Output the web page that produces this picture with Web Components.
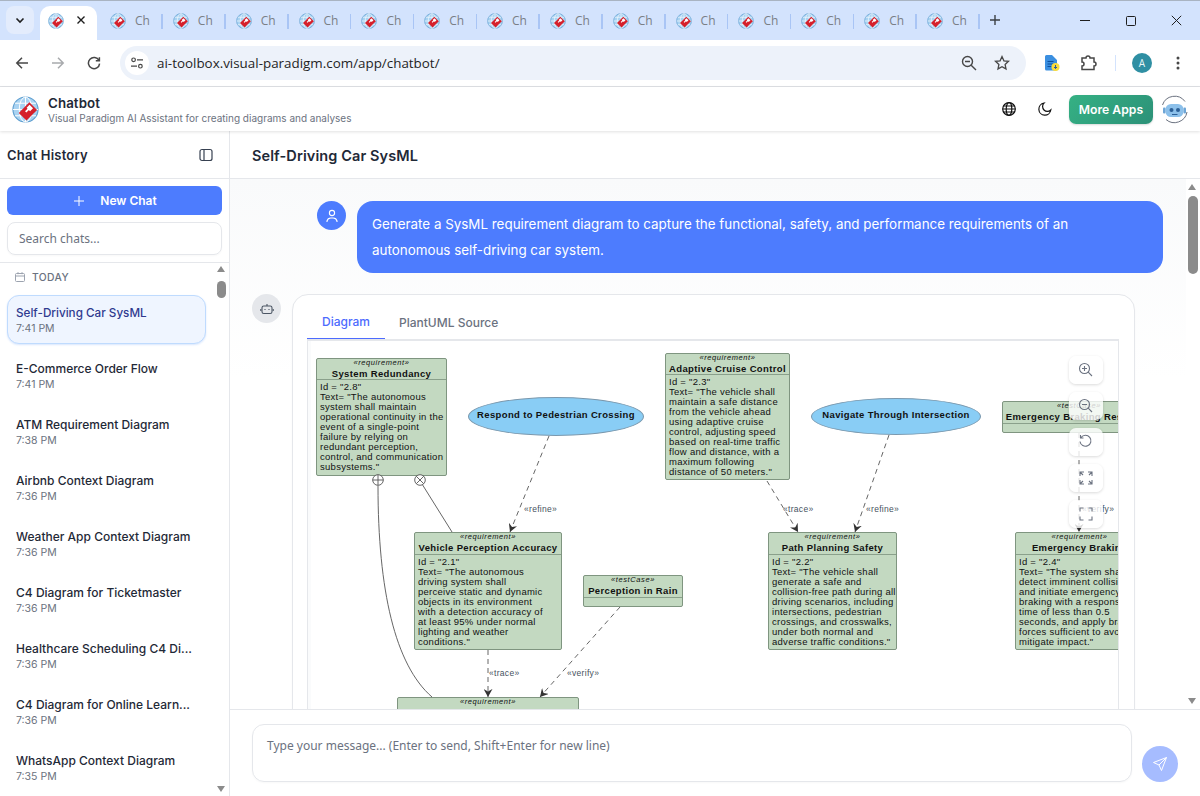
<!DOCTYPE html>
<html lang="en">
<head>
<meta charset="utf-8">
<title>Chatbot</title>
<style>
    html, body { margin: 0; height: 100%; overflow: hidden; background: #fff; }
    body { display: flex; flex-direction: column; font-family: "Inter", "Noto Sans", sans-serif; }
    .workspace { display: flex; flex: 1; min-height: 0; }
</style>
</head>
<body>
<browser-chrome url="ai-toolbox.visual-paradigm.com/app/chatbot/"></browser-chrome>
<app-header></app-header>
<div class="workspace">
    <chat-sidebar>
        <chat-item active title-text="Self-Driving Car SysML" time="7:41 PM"></chat-item>
        <chat-item title-text="E-Commerce Order Flow" time="7:41 PM"></chat-item>
        <chat-item title-text="ATM Requirement Diagram" time="7:38 PM"></chat-item>
        <chat-item title-text="Airbnb Context Diagram" time="7:36 PM"></chat-item>
        <chat-item title-text="Weather App Context Diagram" time="7:36 PM"></chat-item>
        <chat-item title-text="C4 Diagram for Ticketmaster" time="7:36 PM"></chat-item>
        <chat-item title-text="Healthcare Scheduling C4 Di..." time="7:36 PM"></chat-item>
        <chat-item title-text="C4 Diagram for Online Learn..." time="7:36 PM"></chat-item>
        <chat-item title-text="WhatsApp Context Diagram" time="7:35 PM"></chat-item>
    </chat-sidebar>
    <chat-main title-text="Self-Driving Car SysML">
        <user-message>Generate a SysML requirement diagram to capture the functional, safety, and performance requirements of an autonomous self-driving car system.</user-message>
        <diagram-card>
            <sysml-diagram>
                <uml-node kind="requirement" name="System Redundancy" x="9" y="18" w="131" h="118" head="21">Id = "2.8"<br>Text= "The autonomous<br>system shall maintain<br>operational continuity in the<br>event of a single-point<br>failure by relying on<br>redundant perception,<br>control, and communication<br>subsystems."</uml-node>
                <uml-node kind="requirement" name="Vehicle Perception Accuracy" x="107" y="192" w="148" h="118" head="22">Id = "2.1"<br>Text= "The autonomous<br>driving system shall<br>perceive static and dynamic<br>objects in its environment<br>with a detection accuracy of<br>at least 95% under normal<br>lighting and weather<br>conditions."</uml-node>
                <uml-node kind="testCase" name="Perception in Rain" x="276" y="235" w="100" h="32" head="22"></uml-node>
                <uml-node kind="requirement" name="Adaptive Cruise Control" x="358" y="13" w="125" h="127" head="21">Id = "2.3"<br>Text= "The vehicle shall<br>maintain a safe distance<br>from the vehicle ahead<br>using adaptive cruise<br>control, adjusting speed<br>based on real-time traffic<br>flow and distance, with a<br>maximum following<br>distance of 50 meters."</uml-node>
                <uml-node kind="requirement" name="Path Planning Safety" x="461" y="192" w="129" h="118" head="22">Id = "2.2"<br>Text= "The vehicle shall<br>generate a safe and<br>collision-free path during all<br>driving scenarios, including<br>intersections, pedestrian<br>crossings, and crosswalks,<br>under both normal and<br>adverse traffic conditions."</uml-node>
                <uml-node kind="testCase" name="Emergency Braking Response" x="695" y="61" w="154" h="32" head="22"></uml-node>
                <uml-node kind="requirement" name="Emergency Braking" x="708" y="192" w="129" h="118" head="22">Id = "2.4"<br>Text= "The system shall<br>detect imminent collision<br>and initiate emergency<br>braking with a response<br>time of less than 0.5<br>seconds, and apply brake<br>forces sufficient to avoid or<br>mitigate impact."</uml-node>
                <uml-node kind="requirement" name="Environmental Sensing Robustness" x="90" y="357" w="182" h="60" head="22"></uml-node>
                <uml-usecase name="Respond to Pedestrian Crossing" x="161" y="57" w="176" h="39"></uml-usecase>
                <uml-usecase name="Navigate Through Intersection" x="504" y="58" w="170" h="37"></uml-usecase>
            </sysml-diagram>
        </diagram-card>
    </chat-main>
</div>

<script>
const FAVICON = `
    <svg viewBox="0 0 28 28" width="100%" height="100%" aria-hidden="true">
        <circle cx="14" cy="14" r="13" fill="#a9d3f2" stroke="#5f9fd0" stroke-width="1.2"/>
        <g fill="none" stroke="#fff" stroke-width="1">
            <ellipse cx="14" cy="14" rx="6.5" ry="13"/>
            <path d="M1 14h26M3 7.5h22M3 20.5h22M14 1v26"/>
        </g>
        <path d="M18 6.5l8 8-11 11-8-8z" fill="#d5202b"/>
        <path d="M15.2 12.2l3-3 3.6 3.6-3 3-1.3-1.3-2.6 2.6-1.4-1.4 2.6-2.6z" fill="#fff"/>
    </svg>`;

class BrowserChrome extends HTMLElement {
    constructor() {
        super();
        this.attachShadow({ mode: 'open' });
    }

    connectedCallback() {
        const tabs = Array.from({ length: 14 }, () => `
            <div class="tab"><span class="fav">${FAVICON}</span><span class="label">Ch</span></div>
        `).join('');
        this.shadowRoot.innerHTML = `
            <style>
                :host { display: block; flex: none; font-family: "Open Sans", "Noto Sans", sans-serif; }
                .strip { height: 40px; background: #d3e3fd; display: flex; align-items: flex-end; box-sizing: border-box; border-top: 1px solid #a9b4c2; position: relative; }
                .down { width: 28px; height: 28px; margin: 0 6px 6px 6px; background: #e3ecfc; border-radius: 8px; display: flex; align-items: center; justify-content: center; }
                .active { width: 57px; height: 34px; box-sizing: border-box; background: #fff; border-radius: 10px 10px 0 0; display: flex; align-items: center; padding: 0 11px 6px 8px; justify-content: space-between; }
                .fav { width: 16px; height: 16px; display: block; flex: none; }
                .tab { width: 62.85px; height: 34px; box-sizing: border-box; padding: 0 10px 6px 13px; display: flex; align-items: center; gap: 9px; position: relative; flex: none; }
                .tab::after { content: ""; position: absolute; right: -3px; top: 8px; height: 15px; width: 1.5px; background: #a9c5f5; }
                .label { font-size: 12px; color: #7a7f86; white-space: nowrap; }
                .plus { width: 28px; height: 28px; margin: 0 0 6px 4px; display: flex; align-items: center; justify-content: center; }
                .win { margin-left: auto; display: flex; height: 39px; align-self: flex-start; padding-right: 1px; }
                .win span { width: 46px; display: flex; align-items: center; justify-content: center; }
                .bar { height: 47px; box-sizing: border-box; background: #fff; border-bottom: 1px solid #dfe1e5; display: flex; align-items: center; padding: 0 9px 0 7px; border-radius: 10px 10px 0 0; }
                .nav { width: 30px; height: 30px; margin-right: 6px; display: flex; align-items: center; justify-content: center; }
                .omni { width: 906px; height: 34px; margin-left: 5px; box-sizing: border-box; background: #edf2fa; border-radius: 17px; display: flex; align-items: center; padding: 0 16px 0 5px; }
                .site { width: 24px; height: 24px; background: #fff; border-radius: 50%; display: flex; align-items: center; justify-content: center; margin-right: 8px; }
                .url { flex: 1; font-size: 13.4px; color: #1f1f1f; white-space: nowrap; }
                .omni svg.act { margin-left: 17px; }
                .tools { display: flex; align-items: center; margin-left: 0; }
                .tools > span { display: flex; align-items: center; justify-content: center; }
                .avatar { width: 20px; height: 20px; border-radius: 50%; background: #2f8fa3; color: #e8f6f8; font-size: 10px; display: flex; align-items: center; justify-content: center; }
                .sep { width: 1px; height: 16px; background: #d3e3fd; }
            </style>
            <div class="strip">
                <div class="down"><svg width="12" height="12" viewBox="0 0 12 12"><path d="M2.5 4.5L6 8l3.5-3.5" fill="none" stroke="#1f1f1f" stroke-width="1.6"/></svg></div>
                <div class="active"><span class="fav">${FAVICON}</span><svg width="10" height="10" viewBox="0 0 10 10"><path d="M1.5 1.5l7 7M8.5 1.5l-7 7" stroke="#1f1f1f" stroke-width="1.4"/></svg></div>
                ${tabs}
                <div class="plus"><svg width="12" height="12" viewBox="0 0 12 12"><path d="M6 1v10M1 6h10" stroke="#3c4043" stroke-width="1.4"/></svg></div>
                <div class="win">
                    <span><svg width="11" height="11" viewBox="0 0 11 11"><path d="M1 5.5h10" stroke="#1f1f1f"/></svg></span>
                    <span><svg width="11" height="11" viewBox="0 0 11 11"><rect x="1.5" y="1.5" width="9" height="9" rx="1" fill="none" stroke="#1f1f1f"/></svg></span>
                    <span><svg width="11" height="11" viewBox="0 0 11 11"><path d="M.8.8l9.4 9.4M10.2.8L.8 10.2" stroke="#1f1f1f"/></svg></span>
                </div>
            </div>
            <div class="bar">
                <span class="nav"><svg width="14" height="14" viewBox="0 0 14 14"><path d="M13 7H2M7 1.8L1.8 7 7 12.2" fill="none" stroke="#474747" stroke-width="1.5"/></svg></span>
                <span class="nav"><svg width="14" height="14" viewBox="0 0 14 14"><path d="M1 7h11M7 1.8L12.2 7 7 12.2" fill="none" stroke="#a8aaad" stroke-width="1.5"/></svg></span>
                <span class="nav"><svg width="14" height="14" viewBox="0 0 14 14"><path d="M12 4.5A5.6 5.6 0 1 0 12.6 7.6M12.4 1.2v3.6H8.8" fill="none" stroke="#474747" stroke-width="1.5"/></svg></span>
                <div class="omni">
                    <span class="site"><svg width="14" height="14" viewBox="0 0 14 14" fill="none" stroke="#474747" stroke-width="1.2"><circle cx="3.6" cy="3.8" r="1.8"/><path d="M7 3.8h6M1 10.2h6"/><circle cx="10.4" cy="10.2" r="1.8"/></svg></span>
                    <span class="url">${this.getAttribute('url')}</span>
                    <svg class="act" width="16" height="16" viewBox="0 0 16 16" fill="none" stroke="#474747" stroke-width="1.4"><circle cx="6.5" cy="6.5" r="5"/><path d="M4 6.5h5M10.2 10.2L15 15"/></svg>
                    <svg class="act" width="16" height="16" viewBox="0 0 16 16" fill="none" stroke="#474747" stroke-width="1.3"><path d="M8 1.6l1.9 4.2 4.6.5-3.4 3.1.9 4.5L8 11.7l-4 2.2.9-4.5L1.500 6.300l4.6-.5z"/></svg>
                </div>
                <div class="tools">
                    <span style="width:16px;margin-left:18px"><svg width="16" height="18" viewBox="0 0 16 18"><path d="M1 2.500A1.500 1.500 0 0 1 2.500 1H8l5 5v9a1.500 1.500 0 0 1-1.500 1.500h-9A1.500 1.500 0 0 1 1 15z" fill="#3b8fe0"/><path d="M3.500 7.500h6M3.500 10h6M3.500 12.500h4" stroke="#0d4f9e"/><circle cx="11.500" cy="13" r="4" fill="#fbdc3c"/><path d="M11.500 11v3.500M10 13l1.500 1.500L13 13" stroke="#2a5a9c" fill="none"/></svg></span>
                    <span style="width:18px;margin-left:20px"><svg width="18" height="18" viewBox="0 0 18 18"><path d="M2 4.500h4a2 2 0 0 1 4 0h4v4a2 2 0 0 1 0 4v3.500H2v-3.500a2 2 0 0 0 0-4z" fill="none" stroke="#474747" stroke-width="1.500" transform="translate(0 -.5)"/></svg></span>
                    <span class="sep" style="margin-left:17px"></span>
                    <span class="avatar" style="margin-left:16px">A</span>
                    <span style="width:4px;margin-left:24px"><svg width="4" height="14" viewBox="0 0 4 14" fill="#474747"><circle cx="2" cy="2" r="1.500"/><circle cx="2" cy="7" r="1.500"/><circle cx="2" cy="12" r="1.500"/></svg></span>
                </div>
            </div>
        `;
    }
}

class AppHeader extends HTMLElement {
    constructor() {
        super();
        this.attachShadow({ mode: 'open' });
    }

    connectedCallback() {
        this.shadowRoot.innerHTML = `
            <style>
                :host { display: flex; flex: none; height: 44px; align-items: center; padding: 0 11px 0 12px; background: #fff; box-shadow: 0 1px 3px rgba(0,0,0,.12); position: relative; z-index: 2; }
                .logo { width: 27px; height: 27px; margin-right: 9px; }
                .names { flex: 1; margin-top: 3px; }
                .name { font-size: 13.3px; font-weight: 600; color: #1f2937; line-height: 15px; letter-spacing: .1px; }
                .sub { font-size: 10px; color: #6b7280; line-height: 15px; }
                .icon { display: flex; width: 16px; height: 16px; margin-right: 20px; }
                .icon + .icon { margin-right: 17px; }
                .more { height: 29px; width: 84px; border: 0; border-radius: 7px; background: linear-gradient(135deg, #35b184, #2c9178); color: #fff; font: 600 12.2px "Inter", sans-serif; margin: 0 7px 0 -1px; box-shadow: 0 1px 2px rgba(0,0,0,.15); padding: 0; }
                .bot { width: 29px; height: 29px; }
            </style>
            <span class="logo">${FAVICON}</span>
            <div class="names">
                <div class="name">Chatbot</div>
                <div class="sub">Visual Paradigm AI Assistant for creating diagrams and analyses</div>
            </div>
            <span class="icon"><svg width="16" height="16" viewBox="0 0 16 16" fill="none" stroke="#111" stroke-width="1.200"><circle cx="8" cy="8" r="6.300"/><ellipse cx="8" cy="8" rx="2.800" ry="6.300"/><path d="M1.700 8h12.600M2.500 5h11M2.500 11h11"/></svg></span>
            <span class="icon"><svg width="16" height="16" viewBox="0 0 16 16" fill="none" stroke="#111" stroke-width="1.200"><path d="M7 2.200A6 6 0 1 0 13.800 9 4.800 4.800 0 0 1 7 2.200z"/></svg></span>
            <button class="more">More Apps</button>
            <span class="bot">
                <svg width="29" height="29" viewBox="0 0 29 29" fill="none">
                    <path d="M2.500 10A12.800 12.800 0 0 1 25 6.500M27 17A12.800 12.800 0 0 1 6 24.500" stroke="#6b7280" stroke-width="1"/>
                    <rect x="5.500" y="9" width="18" height="13" rx="5.500" fill="#8cc0ea"/>
                    <circle cx="11.500" cy="15" r="2" fill="#2b5f96"/><circle cx="18" cy="15" r="2" fill="#2b5f96"/>
                    <path d="M12 19.500h5.500" stroke="#2b5f96"/>
                    <rect x="3" y="12.500" width="2.500" height="6" rx="1" fill="#6da5d6"/><rect x="23.500" y="12.500" width="2.500" height="6" rx="1" fill="#6da5d6"/>
                </svg>
            </span>
        `;
    }
}

class ChatSidebar extends HTMLElement {
    constructor() {
        super();
        this.attachShadow({ mode: 'open' });
        this.shadowRoot.innerHTML = `
            <style>
                :host { display: flex; flex-direction: column; flex: none; width: 230px; box-sizing: border-box; border-right: 1px solid #e5e7eb; background: #fff; position: relative; overflow: hidden; }
                .head { height: 48px; flex: none; box-sizing: border-box; border-bottom: 1px solid #e5e7eb; display: flex; align-items: center; justify-content: space-between; padding: 1px 16px 0 7px; }
                h2 { margin: 0; font-size: 13px; font-weight: 600; color: #1f2937; letter-spacing: .2px; }
                .tools { flex: none; padding: 7px; border-bottom: 1px solid #e5e7eb; display: flex; flex-direction: column; gap: 7px; height: 84px; box-sizing: border-box; }
                .new { height: 29px; flex: none; border: 0; border-radius: 6px; background: #4d7cfe; color: #fff; font: 600 12px "Inter", sans-serif; display: flex; align-items: center; justify-content: center; gap: 15px; padding: 0 0 0 1px; }
                .search { height: 33px; flex: none; box-sizing: border-box; border: 1px solid #e5e7eb; border-radius: 8px; padding: 0 11px; font: 12px "Noto Sans", sans-serif; color: #6b7280; display: flex; align-items: center; box-shadow: 0 1px 2px rgba(0,0,0,.03); }
                .day { flex: none; height: 32px; display: flex; align-items: center; gap: 7px; padding: 0 0 5px 15px; box-sizing: border-box; font-size: 10.3px; font-weight: 500; color: #6b7280; letter-spacing: .4px; }
                .list { display: flex; flex-direction: column; gap: 7px; padding: 0 23px 0 7px; flex: 1; }
                .scroll { position: absolute; right: 1px; top: 133px; bottom: 0; width: 12px; }
                .up { position: absolute; top: 2px; left: 1px; width: 0; height: 0; border: 4.500px solid transparent; border-top: 0; border-bottom: 6px solid #8b8b8b; }
                .thumb { position: absolute; top: 17px; left: 1px; width: 9px; height: 17px; border-radius: 5px; background: #8b8b8b; }
                .dn { position: absolute; bottom: 4px; left: 1px; width: 0; height: 0; border: 4.500px solid transparent; border-bottom: 0; border-top: 6px solid #8b8b8b; }
            </style>
            <div class="head">
                <h2>Chat History</h2>
                <svg width="14" height="14" viewBox="0 0 14 14" fill="none" stroke="#374151" stroke-width="1.200"><rect x="1" y="1.500" width="12" height="11" rx="2"/><path d="M5 1.500v11"/></svg>
            </div>
            <div class="tools">
                <button class="new"><svg width="12" height="12" viewBox="0 0 12 12"><path d="M6 1v10M1 6h10" stroke="#fff" stroke-width="1"/></svg>New Chat</button>
                <div class="search">Search chats...</div>
            </div>
            <div class="day">
                <svg width="10" height="10" viewBox="0 0 10 10" fill="none" stroke="#9ca3af" stroke-width="1"><rect x=".5" y="1.500" width="9" height="8" rx="1"/><path d="M.5 4h9M3 .2v2M7 .2v2"/></svg>
                TODAY
            </div>
            <div class="list"><slot></slot></div>
            <div class="scroll"><span class="up"></span><span class="thumb"></span><span class="dn"></span></div>
        `;
    }
}

class ChatItem extends HTMLElement {
    constructor() {
        super();
        this.attachShadow({ mode: 'open' });
    }

    connectedCallback() {
        this.shadowRoot.innerHTML = `
            <style>
                :host { display: block; height: 49px; box-sizing: border-box; padding: 9px 8px; border-radius: 12px; border: 1px solid transparent; white-space: nowrap; overflow: hidden; }
                :host([active]) { background: #eff5ff; border-color: #bfdbfe; box-shadow: 0 1px 2px rgba(59,130,246,.2); }
                .t { font-size: 12px; font-weight: 500; color: #1f2937; line-height: 16px; }
                :host([active]) .t { color: #2f3a8f; font-size: 11.7px; }
                .m { font-size: 10.500px; color: #6b7280; line-height: 15px; }
            </style>
            <div class="t">${this.getAttribute('title-text')}</div>
            <div class="m">${this.getAttribute('time')}</div>
        `;
    }
}

class ChatMain extends HTMLElement {
    constructor() {
        super();
        this.attachShadow({ mode: 'open' });
    }

    connectedCallback() {
        this.shadowRoot.innerHTML = `
            <style>
                :host { display: flex; flex-direction: column; flex: 1; min-width: 0; position: relative; background: #fff; }
                .title { height: 48px; flex: none; box-sizing: border-box; border-bottom: 1px solid #e5e7eb; display: flex; align-items: center; padding: 1px 22px 0; font-size: 14.500px; font-weight: 600; color: #1f2937; letter-spacing: .1px; }
                .msgs { flex: 1; min-height: 0; overflow: hidden; padding: 22px 37px 0 22px; background: linear-gradient(#f9fafb, #fff 200px); display: flex; flex-direction: column; gap: 21px; position: relative; }
                .scroll { position: absolute; right: 0; top: 0; bottom: 0; width: 14px; background: #fff; }
                .up { position: absolute; top: 5px; left: 2px; width: 0; height: 0; border: 4.500px solid transparent; border-top: 0; border-bottom: 6px solid #8b8b8b; }
                .thumb { position: absolute; top: 17px; left: 2px; width: 10px; height: 78px; border-radius: 5px; background: #8b8b8b; }
                .dn { position: absolute; bottom: 5px; left: 2px; width: 0; height: 0; border: 4.500px solid transparent; border-bottom: 0; border-top: 6px solid #8b8b8b; }
                .composer { height: 87px; flex: none; box-sizing: border-box; border-top: 1px solid #e5e7eb; background: #fff; padding: 14px 22px 14px; display: flex; gap: 10px; align-items: flex-end; }
                .input { flex: none; width: 880px; height: 58px; box-sizing: border-box; border: 1px solid #e5e7eb; border-radius: 12px; padding: 12px 14px; font: 12px "Noto Sans", sans-serif; color: #6b7280; box-shadow: 0 1px 2px rgba(0,0,0,.03); }
                .send { width: 36px; height: 36px; border-radius: 50%; background: #a6bcff; display: flex; align-items: center; justify-content: center; flex: none; }
            </style>
            <div class="title">${this.getAttribute('title-text')}</div>
            <div class="msgs">
                <slot></slot>
                <div class="scroll"><span class="up"></span><span class="thumb"></span><span class="dn"></span></div>
            </div>
            <div class="composer">
                <div class="input">Type your message... (Enter to send, Shift+Enter for new line)</div>
                <div class="send"><svg width="16" height="16" viewBox="0 0 16 16" fill="none" stroke="#fff" stroke-width="1"><path d="M14.500 1.500L1.500 6.500l5.500 2.500 2.500 5.500zM14.500 1.500L7 9"/></svg></div>
            </div>
        `;
    }
}

class UserMessage extends HTMLElement {
    constructor() {
        super();
        this.attachShadow({ mode: 'open' });
        this.shadowRoot.innerHTML = `
            <style>
                :host { display: flex; gap: 11px; padding-left: 65px; flex: none; }
                .av { width: 29px; height: 29px; border-radius: 50%; background: #4d7cfe; flex: none; display: flex; align-items: center; justify-content: center; }
                .bubble { width: 806px; height: 72px; box-sizing: border-box; background: #4d7cfe; color: #fff; border-radius: 16px; padding: 10px 40px 10px 15px; font-size: 13.4px; line-height: 26px; }
            </style>
            <span class="av"><svg width="14" height="14" viewBox="0 0 14 14" fill="none" stroke="#fff" stroke-width="1.100"><circle cx="7" cy="4" r="2.600"/><path d="M2 13v-1a4 4 0 0 1 4-3h2a4 4 0 0 1 4 3v1"/></svg></span>
            <div class="bubble"><slot></slot></div>
        `;
    }
}

class DiagramCard extends HTMLElement {
    constructor() {
        super();
        this.attachShadow({ mode: 'open' });
        this.shadowRoot.innerHTML = `
            <style>
                :host { display: flex; gap: 11px; flex: none; }
                .av { width: 29px; height: 29px; border-radius: 50%; background: #e5e7eb; flex: none; display: flex; align-items: center; justify-content: center; }
                .card { width: 843px; height: 600px; box-sizing: border-box; background: #fff; border: 1px solid #e5e7eb; border-radius: 16px; padding: 10px 14px 0; box-shadow: 0 1px 2px rgba(0,0,0,.03); }
                .tabs { display: flex; height: 34px; font-size: 12px; font-weight: 500; }
                .tab { padding: 0 14px; height: 33px; line-height: 36px; color: #6b7280; }
                .tab.on { width: 78px; box-sizing: border-box; text-align: center; padding: 0; color: #4d6bfe; border-bottom: 1px solid #4d6bfe; height: 34px; line-height: 34px; }
                .frame { width: 812px; height: 560px; box-sizing: border-box; border: 1px solid #e5e7eb; border-bottom: 0; border-top-width: 2px; position: relative; overflow: hidden; background: #fff; box-shadow: inset 3px 0 0 #fafbfc; }
            </style>
            <span class="av"><svg width="14" height="14" viewBox="0 0 14 14" fill="none" stroke="#4b5563" stroke-width="1.100"><rect x="2" y="4" width="10" height="7.500" rx="1.800"/><path d="M7 4V2M0.800 7v2M13.200 7v2M5 7v1M9 7v1"/></svg></span>
            <div class="card">
                <div class="tabs"><span class="tab on">Diagram</span><span class="tab">PlantUML Source</span></div>
                <div class="frame"><slot></slot></div>
            </div>
        `;
    }
}

class SysmlDiagram extends HTMLElement {
    constructor() {
        super();
        this.attachShadow({ mode: 'open' });
        const tools = [
            '<circle cx="6.500" cy="6.500" r="5"/><path d="M4 6.500h5M6.500 4v5M10.200 10.200L14 14"/>',
            '<circle cx="6.500" cy="6.500" r="5"/><path d="M4 6.500h5M10.200 10.200L14 14"/>',
            '<path d="M3 3.500a5.500 5.500 0 1 1-1 4M2.500 1v3h3"/>',
            '<path d="M2 6V2h4M2 2l3 3M14 6V2h-4M14 2l-3 3M2 10v4h4M2 14l3-3M14 10v4h-4M14 14l-3-3"/>',
            '<path d="M2 5.500V2h3.500M14 5.500V2h-3.500M2 10.500V14h3.500M14 10.500V14h-3.500"/>'
        ].map((d) => `<span class="tool"><svg width="16" height="16" viewBox="0 0 16 16" fill="none" stroke="#6b7280" stroke-width="1.100">${d}</svg></span>`).join('');
        const labels = [
            ['«refine»', 217, 172], ['«trace»', 476, 172], ['«refine»', 559, 172], ['«verify»', 775, 172],
            ['«trace»', 182, 336], ['«verify»', 260, 336]
        ].map(([t, x, y]) => `<text x="${x}" y="${y}">${t}</text>`).join('');
        this.shadowRoot.innerHTML = `
            <style>
                :host { display: block; position: absolute; inset: -1px 0 0 -1px; font-family: "Liberation Sans", Arial, sans-serif; }
                svg.lines { position: absolute; left: 0; top: 0; width: 811px; height: 560px; overflow: visible; }
                text { font: 8.5px "Liberation Sans", Arial, sans-serif; fill: #46525e; letter-spacing: .3px; }
                .zoom { position: absolute; right: 15px; top: 16px; display: flex; flex-direction: column; gap: 8px; z-index: 3; }
                .tool { width: 34px; height: 28px; box-sizing: border-box; border-radius: 7px; background: rgba(255,255,255,.8); box-shadow: 0 1px 3px rgba(0,0,0,.15); display: flex; align-items: center; justify-content: center; }
            </style>
            <slot></slot>
            <svg class="lines" viewBox="0 0 811 560">
                <defs>
                    <marker id="arr" viewBox="0 0 10 10" refX="9" refY="5" markerWidth="9" markerHeight="9" orient="auto" markerUnits="userSpaceOnUse">
                        <path d="M0 0L9 5L0 10L3 5z" fill="#333"/>
                    </marker>
                </defs>
                <g fill="none" stroke="#555" stroke-width=".9">
                    <g stroke-dasharray="5 4">
                        <path d="M242 96L203 192" marker-end="url(#arr)"/>
                        <path d="M460 141L491 192" marker-end="url(#arr)"/>
                        <path d="M582 95L548 192" marker-end="url(#arr)"/>
                        <path d="M772 93V192" marker-end="url(#arr)"/>
                        <path d="M181 310V357" marker-end="url(#arr)"/>
                        <path d="M313 267L233 357" marker-end="url(#arr)"/>
                    </g>
                    <path d="M71 146C71 250 88 325 125 357"/>
                    <path d="M115 144L145 192"/>
                    <circle cx="71" cy="140" r="5.300" fill="#fff"/><path d="M65.700 140h10.600M71 134.700v10.600"/>
                    <circle cx="113" cy="140" r="5.300" fill="#fff"/><path d="M109.300 136.300l7.400 7.400M116.700 136.300l-7.400 7.400"/>
                </g>
                ${labels}
            </svg>
            <div class="zoom">${tools}</div>
        `;
    }
}

class UmlNode extends HTMLElement {
    constructor() {
        super();
        this.attachShadow({ mode: 'open' });
    }

    connectedCallback() {
        const a = (n) => this.getAttribute(n);
        this.style.cssText = `left:${a('x')}px;top:${a('y')}px;width:${a('w')}px;height:${a('h')}px`;
        this.shadowRoot.innerHTML = `
            <style>
                :host { display: flex; flex-direction: column; position: absolute; box-sizing: border-box; background: #c3d9c1; border: 1px solid #7f9580; border-radius: 2px; color: #111; overflow: hidden; font-family: "Liberation Sans", Arial, sans-serif; }
                .head { height: ${a('head')}px; flex: none; box-sizing: border-box; border-bottom: 1px solid #8aa08b; text-align: center; white-space: nowrap; }
                .st { font-size: 7.500px; font-style: italic; line-height: 8px; letter-spacing: .6px; }
                .nm { font-size: 9.500px; font-weight: 700; line-height: 12px; letter-spacing: .35px; margin-top: 1px; }
                .body { padding: 2px 3px 0; font-size: 9.500px; line-height: 10px; white-space: nowrap; letter-spacing: .27px; }
            </style>
            <div class="head"><div class="st">«${a('kind')}»</div><div class="nm">${a('name')}</div></div>
            <div class="body"><slot></slot></div>
        `;
    }
}

class UmlUsecase extends HTMLElement {
    constructor() {
        super();
        this.attachShadow({ mode: 'open' });
    }

    connectedCallback() {
        const a = (n) => this.getAttribute(n);
        this.style.cssText = `left:${a('x')}px;top:${a('y')}px;width:${a('w')}px;height:${a('h')}px`;
        this.shadowRoot.innerHTML = `
            <style>
                :host { display: flex; position: absolute; box-sizing: border-box; align-items: center; justify-content: center; background: #89cdf5; border: 1px solid #7b98ad; border-radius: 50%; font: 700 9.500px "Liberation Sans", Arial, sans-serif; letter-spacing: .35px; color: #111; white-space: nowrap; padding-bottom: 5px; }
            </style>
            ${a('name')}
        `;
    }
}

customElements.define('browser-chrome', BrowserChrome);
customElements.define('app-header', AppHeader);
customElements.define('chat-sidebar', ChatSidebar);
customElements.define('chat-item', ChatItem);
customElements.define('chat-main', ChatMain);
customElements.define('user-message', UserMessage);
customElements.define('diagram-card', DiagramCard);
customElements.define('sysml-diagram', SysmlDiagram);
customElements.define('uml-node', UmlNode);
customElements.define('uml-usecase', UmlUsecase);
</script>
</body>
</html>
